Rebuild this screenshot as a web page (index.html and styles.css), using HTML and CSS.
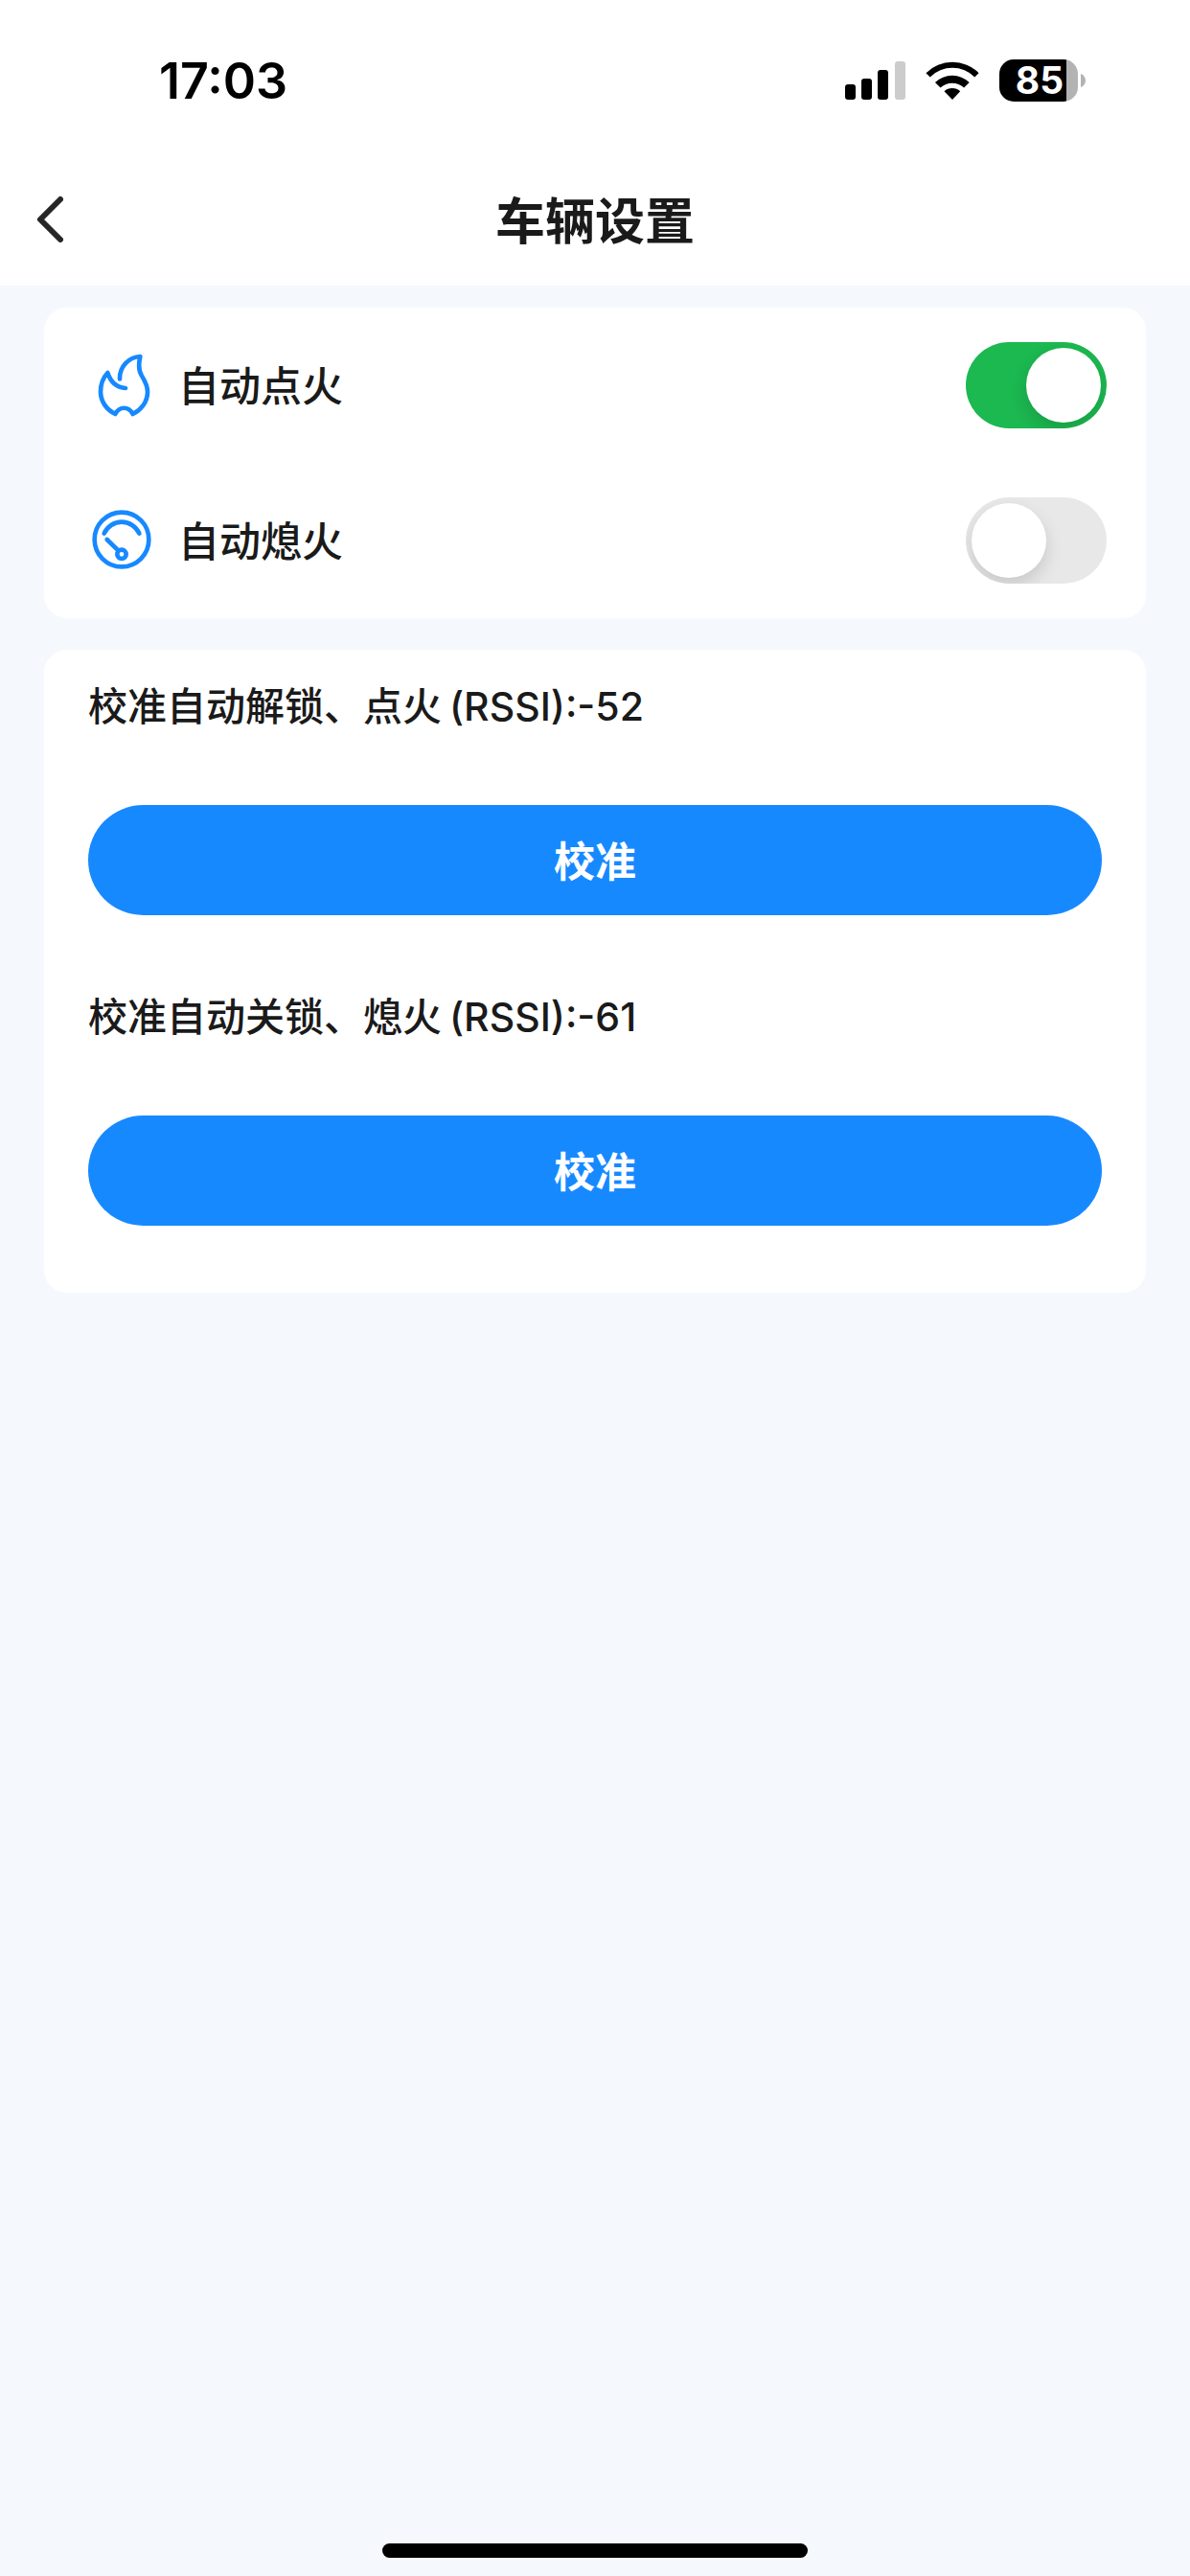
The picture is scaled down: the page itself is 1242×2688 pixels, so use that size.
FILE: index.html
```html
<!DOCTYPE html>
<html lang="zh-CN">
<head>
  <meta charset="UTF-8">
  <meta name="viewport" content="width=device-width, initial-scale=1.0">
  <title>车辆设置</title>
  <link rel="stylesheet" href="styles.css">
</head>
<body>
  <header class="header">
    <div class="status-bar">
      <span class="time">17:03</span>
      <div class="status-icons">
        <svg class="signal" viewBox="0 0 63 40" aria-hidden="true">
          <rect x="0" y="24" width="11" height="16" rx="3"/>
          <rect x="17" y="18" width="11" height="22" rx="3"/>
          <rect x="34" y="9" width="11" height="31" rx="3"/>
          <rect x="52" y="0" width="11" height="40" rx="3" fill="#ccc"/>
        </svg>
        <svg class="wifi" viewBox="373 67 168 122" aria-hidden="true">
          <path d="M373 104 A119 119 0 0 1 541 104 L528 117 A101 101 0 0 0 386 117 Z"/>
          <path d="M402 134 A79 79 0 0 1 511 134 L494 151 A56 56 0 0 0 419 151 Z"/>
          <path d="M431 162 A38 38 0 0 1 482 162 L457 189 Z"/>
        </svg>
        <div class="battery">
          <span class="battery-level">85</span>
          <svg class="battery-cap" viewBox="0 0 5 14" aria-hidden="true">
            <path d="M0 0 C3 1 5 4 5 7 C5 10 3 13 0 14 Z"/>
          </svg>
        </div>
      </div>
    </div>
    <nav class="nav">
      <button class="back" type="button" aria-label="返回">
        <svg viewBox="0 0 28 50" aria-hidden="true">
          <path d="M25 4 L4 25 L25 46"/>
        </svg>
      </button>
      <h1>车辆设置</h1>
    </nav>
  </header>

  <main class="content">
    <section class="card">
      <div class="row">
        <svg class="row-icon" viewBox="198 207 186 198" aria-hidden="true">
          <path d="M285 286 C284 247 313 218 349 216 C343 242 344 260 353 275 C364 293 372 307 372 326 C372 358 352 383 326 396 C312 371 284 371 271 396 C243 382 225 356 225 326 C225 302 233 282 247 267 C256 295 276 313 303 315"/>
        </svg>
        <label for="autoStart">自动点火</label>
        <input class="switch" type="checkbox" id="autoStart" checked>
      </div>
      <div class="row">
        <svg class="row-icon" viewBox="198 693 186 198" aria-hidden="true">
          <circle cx="291" cy="789" r="85"/>
          <path d="M236 770 A60 60 0 0 1 346 770"/>
          <path d="M245 789 L280 823"/>
          <circle cx="291" cy="835" r="14"/>
        </svg>
        <label for="autoStop">自动熄火</label>
        <input class="switch" type="checkbox" id="autoStop">
      </div>
    </section>

    <section class="card calibration">
      <div class="group">
        <p>校准自动解锁、点火<span class="rssi">(RSSI):-52</span></p>
        <button class="primary" type="button">校准</button>
      </div>
      <div class="group">
        <p>校准自动关锁、熄火<span class="rssi">(RSSI):-61</span></p>
        <button class="primary" type="button">校准</button>
      </div>
    </section>
  </main>

  <footer class="home">
    <div class="home-indicator"></div>
  </footer>
</body>
</html>
```
FILE: styles.css
```css
* {
  box-sizing: border-box;
}
body {
  margin: 0;
  min-height: 100vh;
  display: flex;
  flex-direction: column;
  background-color: #f5f8fd;
  color: #1a1a1a;
  font-family: Inter, "Noto Sans CJK SC", sans-serif;
}
button {
  border: none;
  padding: 0;
  font-family: inherit;
  cursor: pointer;
}

/* Header */
.header {
  background-color: #fff;
}
.status-bar {
  display: flex;
  align-items: center;
  justify-content: space-between;
  height: 160px;
  padding: 8px 109px 0 166px;
  color: #000;
}
.time {
  font-size: 52px;
  font-weight: 600;
}
.status-icons {
  display: flex;
  align-items: center;
  gap: 21px;
}
.signal {
  width: 63px;
  height: 40px;
}
.wifi {
  width: 56px;
  height: 40px;
}
.battery {
  display: flex;
  align-items: center;
  gap: 3px;
}
.battery-level {
  width: 82px;
  padding-left: 2px;
  border-radius: 15px;
  background: linear-gradient(to right, #000 85%, #b3b3b3 85%);
  color: #fff;
  font-size: 39px;
  font-weight: 700;
  line-height: 44px;
  text-align: center;
}
.battery-cap {
  width: 5px;
  height: 14px;
  fill: #b3b3b3;
}
.nav {
  display: grid;
  grid-template-columns: 100px 1fr 100px;
  align-items: center;
  height: 138px;
}
.nav h1 {
  margin: 0;
  padding-bottom: 4px;
  font-size: 52px;
  font-weight: 700;
  text-align: center;
}
.back {
  display: flex;
  padding: 20px 34px 20px 38px;
  background: none;
}
.back svg {
  width: 28px;
  height: 50px;
  fill: none;
  stroke: #262626;
  stroke-width: 6;
  stroke-linecap: round;
  stroke-linejoin: round;
}

/* Cards */
.content {
  flex: 1;
  display: flex;
  flex-direction: column;
  gap: 33px;
  padding: 23px 46px;
}
.card {
  border-radius: 24px;
  background-color: #fff;
}
.row {
  display: flex;
  align-items: center;
  gap: 28px;
  height: 162px;
  padding: 0 41px 0 50px;
}
.row label {
  flex: 1;
  padding-bottom: 4px;
  font-size: 43px;
  font-weight: 500;
}
.row-icon {
  width: 62px;
  height: 66px;
  fill: none;
  stroke: #1789ff;
  stroke-width: 14;
  stroke-linecap: round;
  stroke-linejoin: round;
}
.switch {
  appearance: none;
  width: 147px;
  height: 90px;
  margin: 0;
  padding: 6px;
  border-radius: 45px;
  background-color: #e8e8e8;
  overflow: hidden;
  display: flex;
  cursor: pointer;
}
.switch::before {
  content: "";
  width: 78px;
  height: 78px;
  border-radius: 50%;
  background-color: #fff;
  box-shadow: 0 8px 18px rgba(0, 0, 0, 0.14);
}
.switch:checked {
  justify-content: flex-end;
  background-color: #1cb850;
}

/* Calibration */
.calibration {
  padding: 0 46px 23px;
}
.group {
  padding-bottom: 47px;
}
.group p {
  margin: 0 0 44px;
  font-size: 41px;
  font-weight: 500;
  line-height: 118px;
}
.rssi {
  margin-left: 8px;
}
.primary {
  display: block;
  width: 100%;
  height: 115px;
  padding-bottom: 4px;
  border-radius: 58px;
  background-color: #1789ff;
  color: #fff;
  font-size: 43px;
  font-weight: 700;
}

.home {
  display: flex;
  justify-content: center;
  padding-bottom: 19px;
}
.home-indicator {
  width: 444px;
  height: 15px;
  border-radius: 8px;
  background-color: #000;
}
```
